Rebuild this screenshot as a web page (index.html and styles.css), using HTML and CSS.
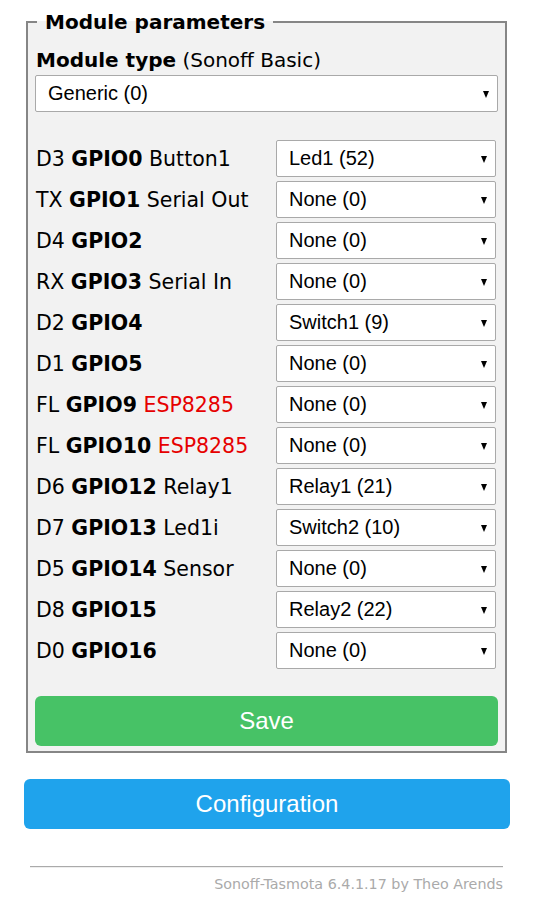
FILE: index.html
```html
<!DOCTYPE html>
<html>
<head>
<meta charset="utf-8">
<link rel="stylesheet" href="styles.css">
</head>
<body>
<div class="main">
  <fieldset class="params">
    <legend class="legend">Module parameters</legend>
    <div class="mtype"><b>Module type</b> (Sonoff Basic)</div>
    <div class="sel sel-wide"><span class="sel-text">Generic (0)</span><span class="arrow"></span></div>
    <div class="rows">
      <div class="lbl">D3 <b>GPIO0</b> Button1</div>
      <div class="sel"><span class="sel-text">Led1 (52)</span><span class="arrow"></span></div>
      <div class="lbl">TX <b>GPIO1</b> Serial Out</div>
      <div class="sel"><span class="sel-text">None (0)</span><span class="arrow"></span></div>
      <div class="lbl">D4 <b>GPIO2</b></div>
      <div class="sel"><span class="sel-text">None (0)</span><span class="arrow"></span></div>
      <div class="lbl">RX <b>GPIO3</b> Serial In</div>
      <div class="sel"><span class="sel-text">None (0)</span><span class="arrow"></span></div>
      <div class="lbl">D2 <b>GPIO4</b></div>
      <div class="sel"><span class="sel-text">Switch1 (9)</span><span class="arrow"></span></div>
      <div class="lbl">D1 <b>GPIO5</b></div>
      <div class="sel"><span class="sel-text">None (0)</span><span class="arrow"></span></div>
      <div class="lbl">FL <b>GPIO9</b> <span class="red">ESP8285</span></div>
      <div class="sel"><span class="sel-text">None (0)</span><span class="arrow"></span></div>
      <div class="lbl">FL <b>GPIO10</b> <span class="red">ESP8285</span></div>
      <div class="sel"><span class="sel-text">None (0)</span><span class="arrow"></span></div>
      <div class="lbl">D6 <b>GPIO12</b> Relay1</div>
      <div class="sel"><span class="sel-text">Relay1 (21)</span><span class="arrow"></span></div>
      <div class="lbl">D7 <b>GPIO13</b> Led1i</div>
      <div class="sel"><span class="sel-text">Switch2 (10)</span><span class="arrow"></span></div>
      <div class="lbl">D5 <b>GPIO14</b> Sensor</div>
      <div class="sel"><span class="sel-text">None (0)</span><span class="arrow"></span></div>
      <div class="lbl">D8 <b>GPIO15</b></div>
      <div class="sel"><span class="sel-text">Relay2 (22)</span><span class="arrow"></span></div>
      <div class="lbl">D0 <b>GPIO16</b></div>
      <div class="sel"><span class="sel-text">None (0)</span><span class="arrow"></span></div>
    </div>
    <button class="btn btn-save">Save</button>
  </fieldset>
  <button class="btn btn-config">Configuration</button>
  <div class="footer">
    <div class="rule"></div>
    <div class="credit">Sonoff-Tasmota 6.4.1.17 by Theo Arends</div>
  </div>
</div>
</body>
</html>
```

FILE: styles.css
```css
html, body {
  margin: 0;
  padding: 0;
  background: #ffffff;
}
body {
  font-family: "DejaVu Sans", Verdana, sans-serif;
  color: #000;
}
.main {
  width: 486px;
  margin-left: 24px;
  padding-top: 10px;
}
.params {
  margin: 0 3px 0 2px;
  padding: 0 7px 5px 7px;
  border: 2px solid #868686;
  background: #f2f2f2;
  min-width: 0;
}
.legend {
  font-weight: bold;
  font-size: 20px;
  line-height: 24px;
  padding: 0 8px;
  margin-left: 2px;
}
.mtype {
  font-size: 20px;
  line-height: 24px;
  margin-top: 14px;
  padding-left: 1px;
}
.sel {
  position: relative;
  box-sizing: border-box;
  height: 37px;
  background: #fff;
  border: 1px solid #a9a9a9;
  border-radius: 2px;
  font-family: "Liberation Sans", Arial, sans-serif;
  font-size: 20px;
  color: #000;
  display: flex;
  align-items: center;
  padding-left: 12px;
}
.sel-wide {
  margin-top: 3px;
}
.arrow {
  position: absolute;
  right: 8px;
  top: 15px;
  width: 0;
  height: 0;
  border-left: 3.5px solid transparent;
  border-right: 3.5px solid transparent;
  border-top: 7px solid #000;
}
.rows {
  display: grid;
  grid-template-columns: 241px 220px;
  row-gap: 4px;
  margin-top: 28px;
  align-items: center;
}
.lbl {
  font-size: 20.5px;
  padding-left: 1px;
  white-space: nowrap;
}
.red {
  color: #e60000;
}
.btn {
  display: block;
  width: 100%;
  border: 0;
  border-radius: 6px;
  color: #fff;
  font-family: "Liberation Sans", Arial, sans-serif;
  font-size: 24px;
  height: 50px;
  padding: 0;
}
.btn-save {
  background: #47c266;
  margin-top: 27px;
}
.btn-config {
  background: #1fa3ec;
  margin-top: 26px;
}
.footer {
  margin-top: 37px;
  padding: 0 7px 0 6px;
}
.rule {
  height: 0;
  border-top: 1px solid #aaa;
  border-bottom: 1px solid #eee;
}
.credit {
  text-align: right;
  color: #aaa;
  font-size: 14.3px;
  margin-top: 8px;
}
```
